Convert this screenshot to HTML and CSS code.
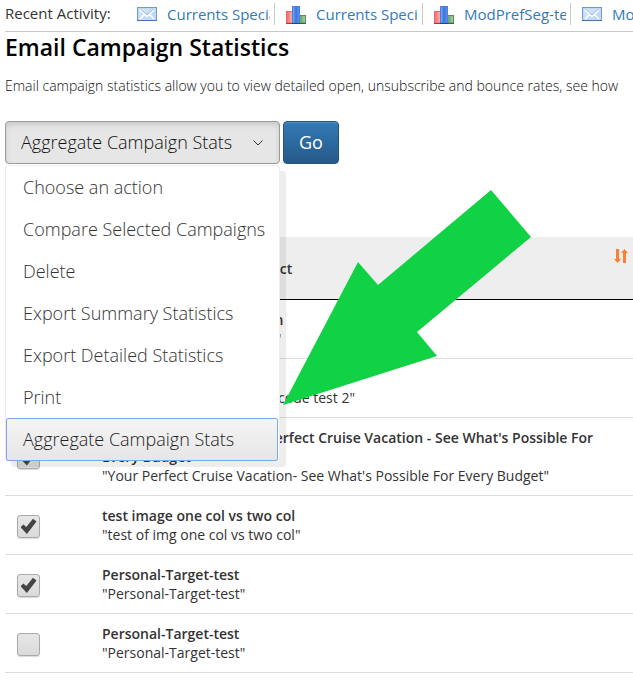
FILE: index.html
```
<!DOCTYPE html>
<html lang="en">
<head>
  <meta charset="UTF-8" />
  <title>Email Campaign Statistics</title>
  <link rel="stylesheet" href="styles.css">
</head>
<body>

  <!-- Shared icons -->
  <svg class="sprite" aria-hidden="true">
    <defs>
      <linearGradient id="mailFill" x1="0" y1="0" x2="1" y2="1">
        <stop offset="0" stop-color="#dceafa" />
        <stop offset="1" stop-color="#b4cff2" />
      </linearGradient>
      <linearGradient id="barBlue" x1="0" y1="0" x2="1" y2="0">
        <stop offset="0" stop-color="#7fb0f7" />
        <stop offset="0.5" stop-color="#3a73dc" />
        <stop offset="1" stop-color="#6496ea" />
      </linearGradient>
      <linearGradient id="barRed" x1="0" y1="0" x2="1" y2="0">
        <stop offset="0" stop-color="#f5666c" />
        <stop offset="1" stop-color="#fbb4b4" />
      </linearGradient>
      <linearGradient id="barGreen" x1="0" y1="0" x2="1" y2="0">
        <stop offset="0" stop-color="#5f9f68" />
        <stop offset="1" stop-color="#a9cfa4" />
      </linearGradient>
    </defs>
    <symbol id="mail" viewBox="0 0 20 20">
      <rect x="0.5" y="3.5" width="19" height="13" fill="url(#mailFill)" stroke="#6a9ad8" />
      <path d="M0 16.5H20" stroke="#4474b8" />
      <rect x="1.5" y="4.5" width="17" height="11" fill="none" stroke="#c5dbf5" />
      <path d="M3 6L10 12.500L17 6M3 15L7.500 10.500M17 15L12.500 10.500" fill="none" stroke="#fff" stroke-width="1.600" />
      <path d="M3.500 5L10 11L16.500 5" fill="none" stroke="#8fb0dd" stroke-width="0.800" />
    </symbol>
    <symbol id="chart" viewBox="0 0 20 20">
      <rect x="0.5" y="7.500" width="6" height="11.500" fill="url(#barRed)" stroke="#e8686e" />
      <rect x="13.500" y="11.500" width="6" height="7.500" fill="url(#barGreen)" stroke="#4f9157" />
      <rect x="6.500" y="2.500" width="7" height="16.500" fill="url(#barBlue)" stroke="#4a7fdc" />
      <path d="M0 19.500H6" stroke="#a83440" />
      <path d="M6 19.500H14" stroke="#1d4494" />
      <path d="M14 19.500H20" stroke="#2f6a38" />
    </symbol>
  </svg>

  <!-- Recent activity bar -->
  <nav class="recent">
    <span class="recent-label">Recent Activity:</span>
    <a class="recent-item" href="#"><svg class="icon"><use href="#mail" /></svg><span>Currents Special</span></a>
    <a class="recent-item" href="#"><svg class="icon"><use href="#chart" /></svg><span>Currents Special</span></a>
    <a class="recent-item" href="#"><svg class="icon"><use href="#chart" /></svg><span>ModPrefSeg-test</span></a>
    <a class="recent-item" href="#"><svg class="icon"><use href="#mail" /></svg><span>ModPrefSeg-test</span></a>
  </nav>

  <main>
    <h1>Email Campaign Statistics</h1>
    <p class="intro">Email campaign statistics allow you to view detailed open, unsubscribe and bounce rates, see how</p>

    <!-- Action picker -->
    <form class="actions">
      <div class="picker">
        <select class="action-select" aria-label="Action">
          <option selected>Aggregate Campaign Stats</option>
        </select>
        <svg class="chevron" viewBox="0 0 12 8"><path d="M1.500 1.500L6 6L10.500 1.500" /></svg>
        <ul class="menu">
          <li><button type="button">Choose an action</button></li>
          <li><button type="button">Compare Selected Campaigns</button></li>
          <li><button type="button">Delete</button></li>
          <li><button type="button">Export Summary Statistics</button></li>
          <li><button type="button">Export Detailed Statistics</button></li>
          <li><button type="button">Print</button></li>
          <li><button type="button" class="active">Aggregate Campaign Stats</button></li>
        </ul>
      </div>
      <button type="submit" class="go">Go</button>
    </form>

    <!-- Campaign list -->
    <table class="campaigns">
      <thead>
        <tr>
          <th class="check"></th>
          <th>
            <div class="head">
              <span>Campaigns Title and Subject</span>
              <svg class="sort" viewBox="0 0 14 14">
                <path d="M2 0H5V10H7L3.500 14L0 10H2ZM9 14H12V4H14L10.500 0L7 4H9Z" />
              </svg>
            </div>
          </th>
        </tr>
      </thead>
      <tbody>
        <tr>
          <td class="check"><input type="checkbox" aria-label="Select campaign"></td>
          <td><b>Monthly Offers: Promotion</b><br>"Monthly Offer: Promotion"</td>
        </tr>
        <tr>
          <td class="check"><input type="checkbox" aria-label="Select campaign"></td>
          <td><b>Coupon code test 2</b><br>"Current offer and coupon code test 2"</td>
        </tr>
        <tr>
          <td class="check"><input type="checkbox" aria-label="Select campaign" checked></td>
          <td><b>Currents Specials - Your Perfect Cruise Vacation - See What's Possible For Every Budget</b><br>"Your Perfect Cruise Vacation- See What's Possible For Every Budget"</td>
        </tr>
        <tr>
          <td class="check"><input type="checkbox" aria-label="Select campaign" checked></td>
          <td><b>test image one col vs two col</b><br>"test of img one col vs two col"</td>
        </tr>
        <tr>
          <td class="check"><input type="checkbox" aria-label="Select campaign" checked></td>
          <td><b>Personal-Target-test</b><br>"Personal-Target-test"</td>
        </tr>
        <tr>
          <td class="check"><input type="checkbox" aria-label="Select campaign"></td>
          <td><b>Personal-Target-test</b><br>"Personal-Target-test"</td>
        </tr>
      </tbody>
    </table>
  </main>

  <!-- Callout arrow -->
  <svg class="arrow" viewBox="0 0 248 216" aria-hidden="true">
    <path d="M0 215L75 72L95 95L208 0L248 47L134 142L154 166Z" />
  </svg>

</body>
</html>
```
FILE: styles.css
```
body {
  margin: 0;
  padding-left: 5px;
  font-family: 'Open Sans', sans-serif;
  font-size: 14px;
  line-height: 19px;
  color: #333;
  background: #fff;
  overflow: hidden;
  position: relative;
}

.sprite {
  position: absolute;
  width: 0;
  height: 0;
}

.recent {
  display: flex;
  height: 31px;
  border-bottom: 1px solid #c8c8c8;
  overflow: hidden;
}

.recent-label {
  flex: 0 0 120px;
  line-height: 27px;
  font-size: 15px;
}

.recent-item {
  flex: 0 0 148px;
  display: flex;
  align-items: center;
  gap: 10px;
  min-width: 0;
  height: 22px;
  margin-top: 3px;
  padding-left: 11px;
  box-sizing: border-box;
  border-right: 1px solid #c8c8c8;
  font-size: 15px;
  line-height: 20px;
  color: #337ab7;
  text-decoration: none;
}

.recent-item:nth-child(2) {
  flex-basis: 150px;
  padding-left: 12px;
}

.recent-item span {
  flex: 1;
  min-width: 0;
  overflow: hidden;
  white-space: nowrap;
  margin-right: 4px;
}

.icon {
  flex: none;
  width: 20px;
  height: 20px;
}

h1 {
  margin: 0;
  font-size: 23px;
  line-height: 31px;
  font-weight: 600;
  color: #000;
}

.intro {
  margin: 13px 0 26px;
  white-space: nowrap;
  font-weight: 300;
  color: #111;
}

.actions {
  display: flex;
  gap: 3px;
  margin-bottom: 73px;
}

.picker {
  position: relative;
  width: 275px;
}

.action-select {
  appearance: none;
  display: block;
  width: 100%;
  height: 43px;
  padding: 0 15px 2px;
  border: 1px solid #999;
  border-radius: 4px;
  background: #e6e6e6;
  box-shadow: inset 0 3px 5px rgba(0, 0, 0, 0.12);
  font-family: inherit;
  font-size: 18px;
  font-weight: 300;
  color: #111;
}

.chevron {
  position: absolute;
  right: 16px;
  top: 18px;
  width: 12px;
  height: 8px;
  fill: none;
  stroke: #333;
}

.menu {
  position: absolute;
  z-index: 1;
  top: 44px;
  left: 0;
  width: 100%;
  box-sizing: border-box;
  margin: 0;
  padding: 0 1px 0 0;
  border: 1px solid #eee;
  border-bottom: 0;
  border-radius: 4px;
  background: #fff;
  box-shadow: 6px 6px 0 rgba(0, 0, 0, 0.07);
  list-style: none;
}

.menu button {
  display: block;
  width: 100%;
  height: 42px;
  padding: 0 16px;
  border: 1px solid transparent;
  background: none;
  font-family: inherit;
  font-size: 18px;
  font-weight: 300;
  text-align: left;
  white-space: nowrap;
  color: #333;
}

.menu .active {
  height: 43px;
  padding-bottom: 2px;
  border-color: #7aa7ee;
  border-radius: 2px;
  background: linear-gradient(#f5f5f5, #e6e6e6);
  color: #222;
}

.go {
  width: 56px;
  height: 43px;
  padding: 0 0 2px;
  border: 1px solid #245580;
  border-radius: 4px;
  background: linear-gradient(#337ab7, #265a88);
  box-shadow: inset 0 1px 0 rgba(255, 255, 255, 0.15);
  font-family: inherit;
  font-size: 18px;
  font-weight: 500;
  color: #fff;
}

.campaigns {
  width: 100%;
  border-collapse: separate;
  border-spacing: 0;
}

.campaigns th {
  height: 62px;
  padding: 0 5px 0 0;
  border-bottom: 1px solid #000;
  background: #eee;
  text-align: left;
  font-weight: 600;
}

.campaigns td {
  padding: 10px 30px 10px 0;
  border-bottom: 1px solid #ddd;
}

.campaigns .check {
  width: 85px;
  padding: 0 0 0 12px;
}

b {
  font-weight: 600;
}

.head {
  display: flex;
  justify-content: space-between;
  align-items: center;
}

.sort {
  width: 14px;
  height: 14px;
  margin-bottom: 24px;
  fill: #ff7f32;
}

input[type="checkbox"] {
  appearance: none;
  display: grid;
  place-items: center;
  width: 23px;
  height: 23px;
  margin: 2px 0 0;
  border: 1px solid #aaa;
  border-radius: 3px;
  background: linear-gradient(#e6e6e6, #dadada);
  box-shadow: 0 1px 1px rgba(0, 0, 0, 0.15);
}

input[type="checkbox"]:checked::before {
  content: "";
  width: 16px;
  height: 16px;
  background: #444;
  clip-path: polygon(0 58%, 18% 40%, 36% 56%, 78% 4%, 100% 22%, 40% 100%);
}

.arrow {
  position: absolute;
  z-index: 2;
  left: 283px;
  top: 190px;
  width: 248px;
  height: 216px;
  fill: #11d245;
}
```
